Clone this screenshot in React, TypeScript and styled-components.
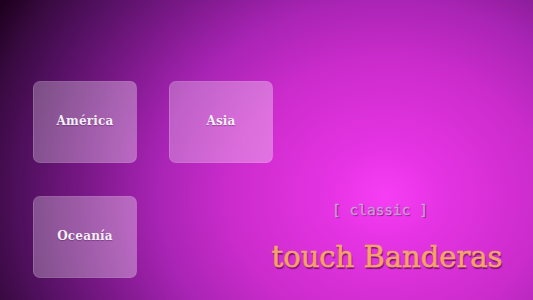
import React from "react";
import styled, { createGlobalStyle } from "styled-components";

const Global = createGlobalStyle`
  html, body { margin: 0; padding: 0; width: 533px; height: 300px; overflow: hidden; }
  * { box-sizing: border-box; }
`;

const Stage = styled.div`
  width: 533px;
  height: 300px;
  display: flex;
  align-items: flex-start;
  padding: 81px 33px 0 33px;
  background: radial-gradient(
    ellipse 440px 380px at 385px 195px,
    #f63ef4 0%,
    #e634e4 12%,
    #cc2ccc 35%,
    #a824b4 52%,
    #7a1888 68%,
    #521060 82%,
    #380a40 92%,
    #200020 100%
  );
  font-family: "DejaVu Serif", serif;
`;

const Grid = styled.div`
  display: grid;
  grid-template-columns: 104px 104px;
  grid-auto-rows: 82px;
  column-gap: 32px;
  row-gap: 33px;
`;

const Tile = styled.div`
  display: flex;
  align-items: center;
  justify-content: center;
  padding-bottom: 3px;
  border-radius: 7px;
  background: linear-gradient(90deg, rgba(255, 255, 255, 0.27), rgba(255, 255, 255, 0.33));
  border: 1px solid rgba(255, 255, 255, 0.07);
  color: #f4eef6;
  font-weight: bold;
  font-size: 12px;
  letter-spacing: 0.2px;
  text-shadow: 0 1px 1px rgba(60, 0, 60, 0.35);
`;

const Titles = styled.div`
  margin-left: auto;
  margin-top: 120px;
  width: 228px;
  display: flex;
  flex-direction: column;
  align-items: center;
`;

const Edition = styled.div`
  font-family: "DejaVu Sans Mono", "Liberation Mono", monospace;
  font-size: 14.5px;
  line-height: 18px;
  color: #c99cd8;
  margin-right: 14px;
  -webkit-text-stroke: 0.3px #c99cd8;
  text-shadow: 1px 1px 1px rgba(70, 0, 70, 0.6);
`;

const Brand = styled.div`
  margin-top: 22px;
  font-family: "DejaVu Serif", serif;
  font-size: 29px;
  line-height: 32px;
  color: #f2a468;
  white-space: nowrap;
  -webkit-text-stroke: 0.6px #f2a468;
  text-shadow: 1px 2px 1px rgba(90, 10, 70, 0.75);
`;

const regions = ["América", "Asia", "Oceanía"];

export default function App() {
  return (
    <>
      <Global />
      <Stage>
        <Grid>
          {regions.map((r) => (
            <Tile key={r}>{r}</Tile>
          ))}
        </Grid>
        <Titles>
          <Edition>[ classic ]</Edition>
          <Brand>touch Banderas</Brand>
        </Titles>
      </Stage>
    </>
  );
}
